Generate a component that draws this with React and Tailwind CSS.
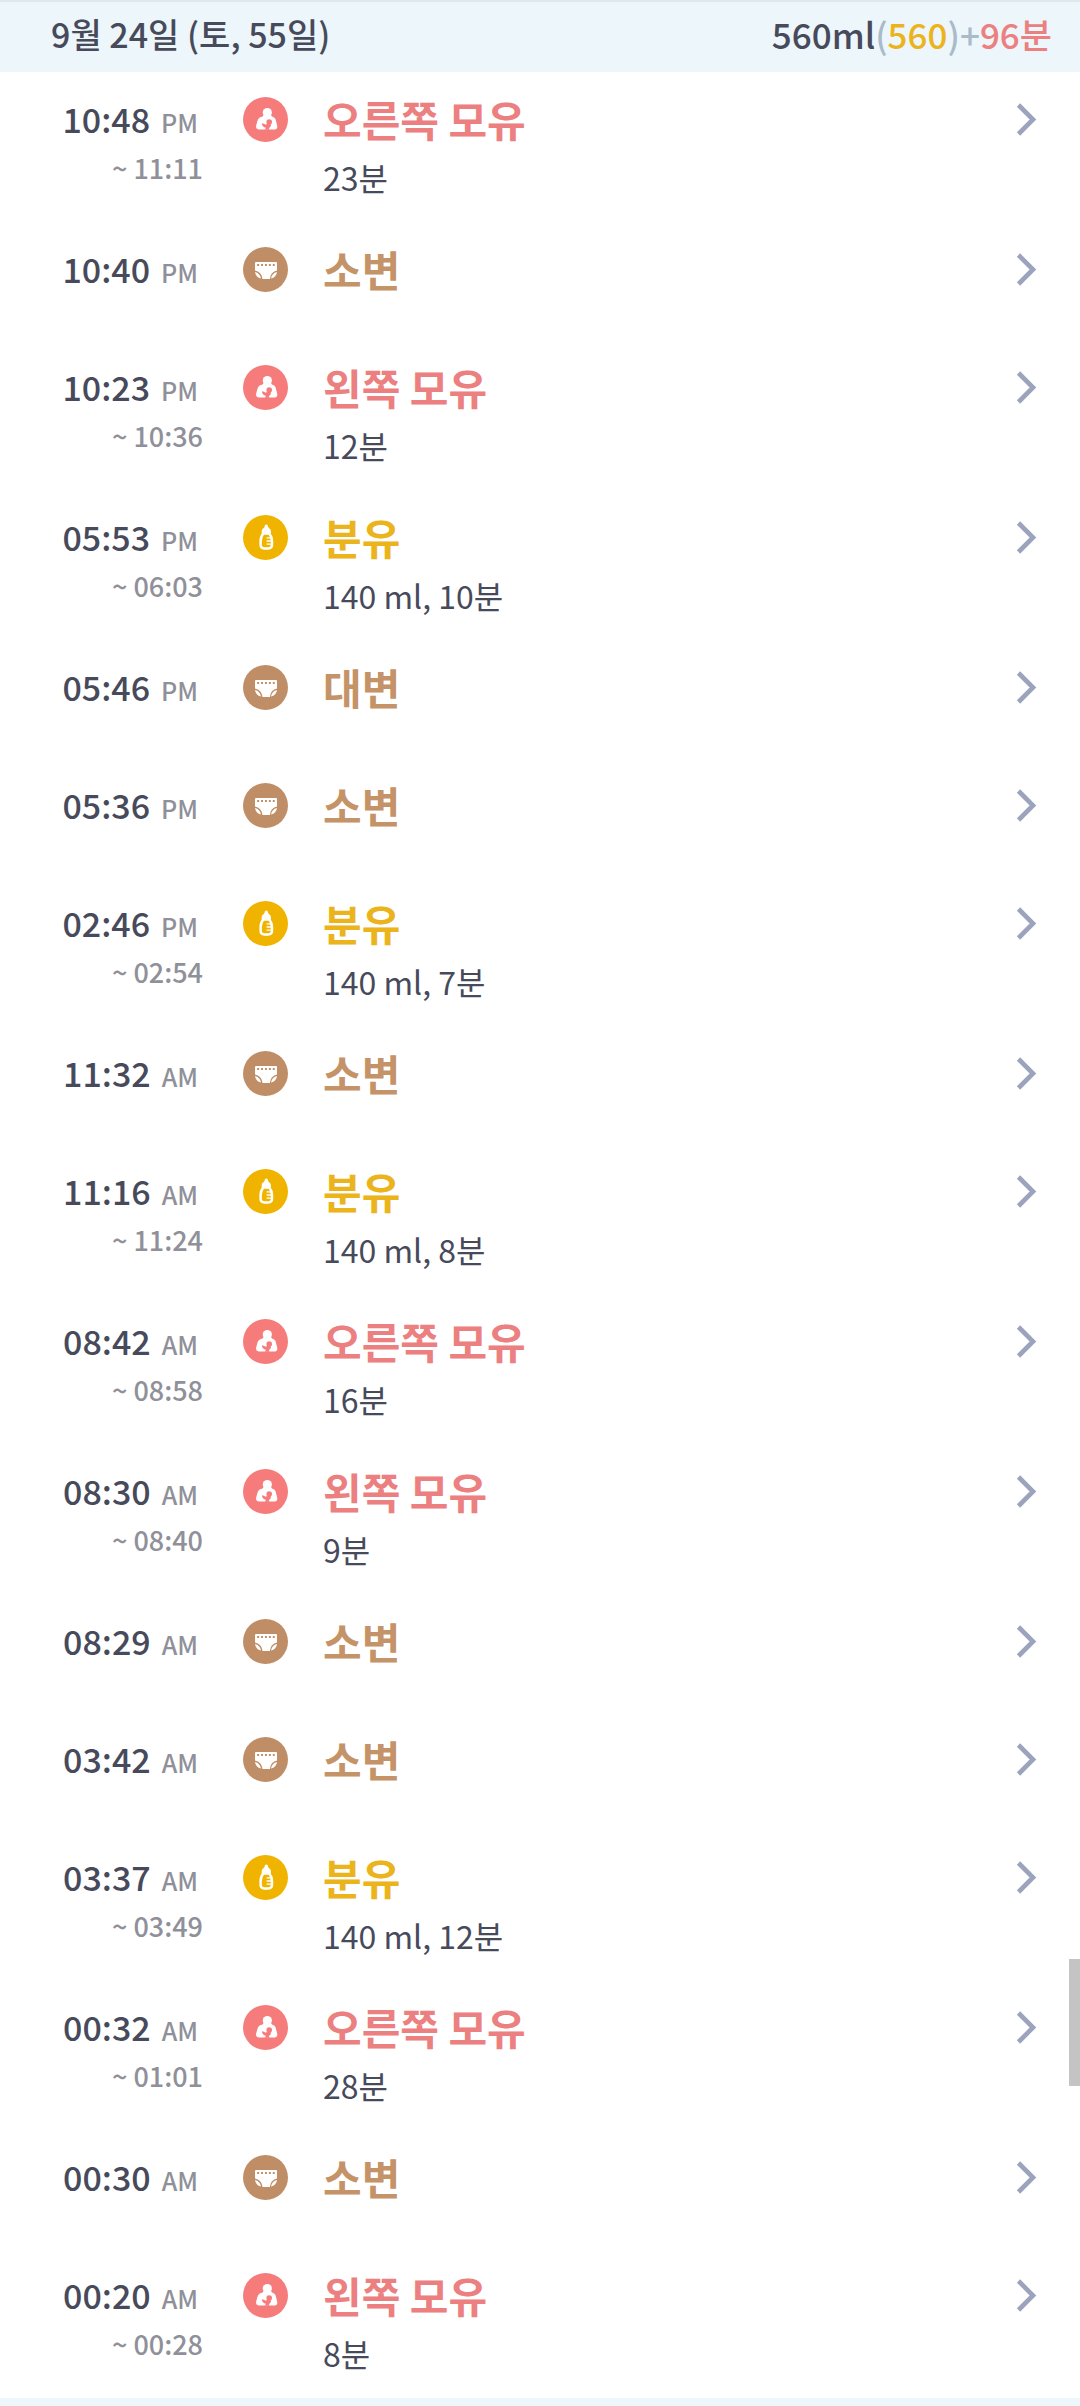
import React from 'react';
import clsx from 'clsx';

const records = [
  { id: 1, time: '10:48', period: 'PM', end: '11:11', type: 'breast', label: '오른쪽 모유', detail: '23분' },
  { id: 2, time: '10:40', period: 'PM', type: 'diaper', label: '소변' },
  { id: 3, time: '10:23', period: 'PM', end: '10:36', type: 'breast', label: '왼쪽 모유', detail: '12분' },
  { id: 4, time: '05:53', period: 'PM', end: '06:03', type: 'bottle', label: '분유', detail: '140 ml, 10분' },
  { id: 5, time: '05:46', period: 'PM', type: 'diaper', label: '대변' },
  { id: 6, time: '05:36', period: 'PM', type: 'diaper', label: '소변' },
  { id: 7, time: '02:46', period: 'PM', end: '02:54', type: 'bottle', label: '분유', detail: '140 ml, 7분' },
  { id: 8, time: '11:32', period: 'AM', type: 'diaper', label: '소변' },
  { id: 9, time: '11:16', period: 'AM', end: '11:24', type: 'bottle', label: '분유', detail: '140 ml, 8분' },
  { id: 10, time: '08:42', period: 'AM', end: '08:58', type: 'breast', label: '오른쪽 모유', detail: '16분' },
  { id: 11, time: '08:30', period: 'AM', end: '08:40', type: 'breast', label: '왼쪽 모유', detail: '9분' },
  { id: 12, time: '08:29', period: 'AM', type: 'diaper', label: '소변' },
  { id: 13, time: '03:42', period: 'AM', type: 'diaper', label: '소변' },
  { id: 14, time: '03:37', period: 'AM', end: '03:49', type: 'bottle', label: '분유', detail: '140 ml, 12분' },
  { id: 15, time: '00:32', period: 'AM', end: '01:01', type: 'breast', label: '오른쪽 모유', detail: '28분' },
  { id: 16, time: '00:30', period: 'AM', type: 'diaper', label: '소변' },
  { id: 17, time: '00:20', period: 'AM', end: '00:28', type: 'breast', label: '왼쪽 모유', detail: '8분' },
];

const BreastIcon = () => (
  <svg viewBox="0 0 45 45" className="size-[45px]" aria-hidden="true">
    <circle cx="22.5" cy="22.5" r="22.5" fill="#f67c7c" />
    <circle cx="24.3" cy="15.5" r="4.6" fill="#fff" />
    <path
      d="M20.500 18h7.600c.4 1.300 1 1.700 2 2 1.700.6 2.500 2 2.900 4l1.200 4.800c.5 2.300-.6 3.700-2.600 3.700H16.500c-2.500 0-4-1.400-3.400-3.800l1.300-4.600c.7-2.300 1.700-3.400 3.600-4.100 1.500-.5 2.200-.8 2.500-2z"
      fill="#fff"
    />
    <circle cx="26.200" cy="25" r="2.800" fill="#f67c7c" />
    <path
      d="M19.200 26.400c.9-.3 1.700.7 3 1.200.8.300 1.400-.3 2.300-.8l3.200.2c.8 1.900-.6 3.500-1.900 4l.8 1.700h-4.900l1.300-1.900c-1.500-.3-2.800-1-3.300-2.100-.5-.9-1-1.800-.5-2.300z"
      fill="#f67c7c"
    />
  </svg>
);

const DiaperIcon = () => (
  <svg viewBox="0 0 45 45" className="size-[45px]" aria-hidden="true">
    <circle cx="22.5" cy="22.5" r="22.5" fill="#c08e66" />
    <path d="M13 15h20a1 1 0 0 1 1 1v7.500c-4 .8-6.500 3.500-7 8.500h-7.500c-.5-5-3.500-7.700-7.500-8.500V16a1 1 0 0 1 1-1z" fill="#fff" />
    <path d="M12 25c3.300.8 5.300 2.900 6 6.400-3.500-.5-5.600-3-6-6.400zM34 25c-3.300.8-5.300 2.900-6 6.400 3.500-.5 5.600-3 6-6.400z" fill="#fff" />
    <path d="M14.200 18h18" stroke="#c08e66" strokeWidth="1.900" strokeDasharray="1.900 2" />
  </svg>
);

const BottleIcon = () => (
  <svg viewBox="0 0 45 45" className="size-[45px]" aria-hidden="true">
    <circle cx="22.5" cy="22.5" r="22.5" fill="#f0b400" />
    <path d="M23.300 9.500c1.200 0 1.600 1 1.700 2.200.2 1.200 2.600 2.100 2.800 3.500 0 .4.200 3.300.2 3.300h-9.400s.2-2.900.2-3.300c.2-1.400 2.600-2.300 2.800-3.500.1-1.200.5-2.200 1.700-2.200z" fill="#fff" />
    <path
      d="M20.300 18.500h6c1.600 1.900 2.700 4.500 2.700 7.800v3.200c0 2.500-1.400 3.900-3.700 3.900h-4c-2.300 0-3.700-1.400-3.700-3.900v-3.200c0-3.300 1.100-5.900 2.700-7.800z"
      fill="#f0b400"
      stroke="#fff"
      strokeWidth="2.500"
    />
    <path d="M23.600 22.800h4.600M23.600 26h5M23.600 29.200h5" stroke="#fff" strokeWidth="1.300" />
  </svg>
);

const ChevronIcon = () => (
  <svg viewBox="0 0 21 33" className="h-[33px] w-[21px]" fill="none" aria-hidden="true">
    <path d="M2.500 2l14.500 14.500L2.500 31" stroke="#9ca3bd" strokeWidth="4.600" />
  </svg>
);

const types = {
  breast: { Icon: BreastIcon, color: 'text-[#ec8080]' },
  diaper: { Icon: DiaperIcon, color: 'text-[#c59368]' },
  bottle: { Icon: BottleIcon, color: 'text-[#ebb41c]' },
};

const RecordRow = ({ record }) => {
  const { Icon, color } = types[record.type];

  return (
    <li>
      <a href={`#record-${record.id}`} className="flex min-h-[118px] items-start pt-[25px] pr-[43px] pb-[21px]">
        <div className="w-[203px] shrink-0 text-right">
          <div className="pr-[5px] text-[34px] leading-[44px] font-medium text-[#474a5b]">
            {record.time}
            <span className="ml-[11px] text-[25px] text-[#8f9099]">{record.period}</span>
          </div>
          {record.end && (
            <div className="mt-1 text-[27px] leading-10 font-medium text-[#8f9099]">~ {record.end}</div>
          )}
        </div>
        <div className="ml-10 shrink-0">
          <Icon />
        </div>
        <div className="ml-[35px] grow">
          <div className={clsx('text-[42px] leading-[43px] font-bold', color)}>{record.label}</div>
          {record.detail && (
            <div className="mt-[13px] text-[32px] leading-[48px] text-[#474a5b]">{record.detail}</div>
          )}
        </div>
        <div className="flex h-[45px] shrink-0 items-center">
          <ChevronIcon />
        </div>
      </a>
    </li>
  );
};

const App = () => {
  return (
    <div className="relative bg-white font-['Noto_Sans_CJK_KR',sans-serif]">
      <header className="flex h-[72px] items-start justify-between border-t-2 border-[#e0e8ec] bg-[#edf6fa] pr-7 pl-[51px] leading-[64px] font-medium text-[#474a5b]">
        <h1 className="text-[34px]">9월 24일 (토, 55일)</h1>
        <p className="text-[35px]">
          560ml<span className="text-[#a9bac8]">(</span>
          <span className="text-[#ebb41c]">560</span>
          <span className="text-[#a9bac8]">)+</span>
          <span className="text-[#ec8080]">96분</span>
        </p>
      </header>

      <ul>
        {records.map((record) => (
          <RecordRow key={record.id} record={record} />
        ))}
      </ul>

      <div className="h-2 bg-[#edf6fa]"></div>

      {/* Scroll thumb */}
      <div className="absolute right-0 bottom-[320px] h-[127px] w-[11px] bg-[#c4c4c4]"></div>
    </div>
  );
};

export default App;
